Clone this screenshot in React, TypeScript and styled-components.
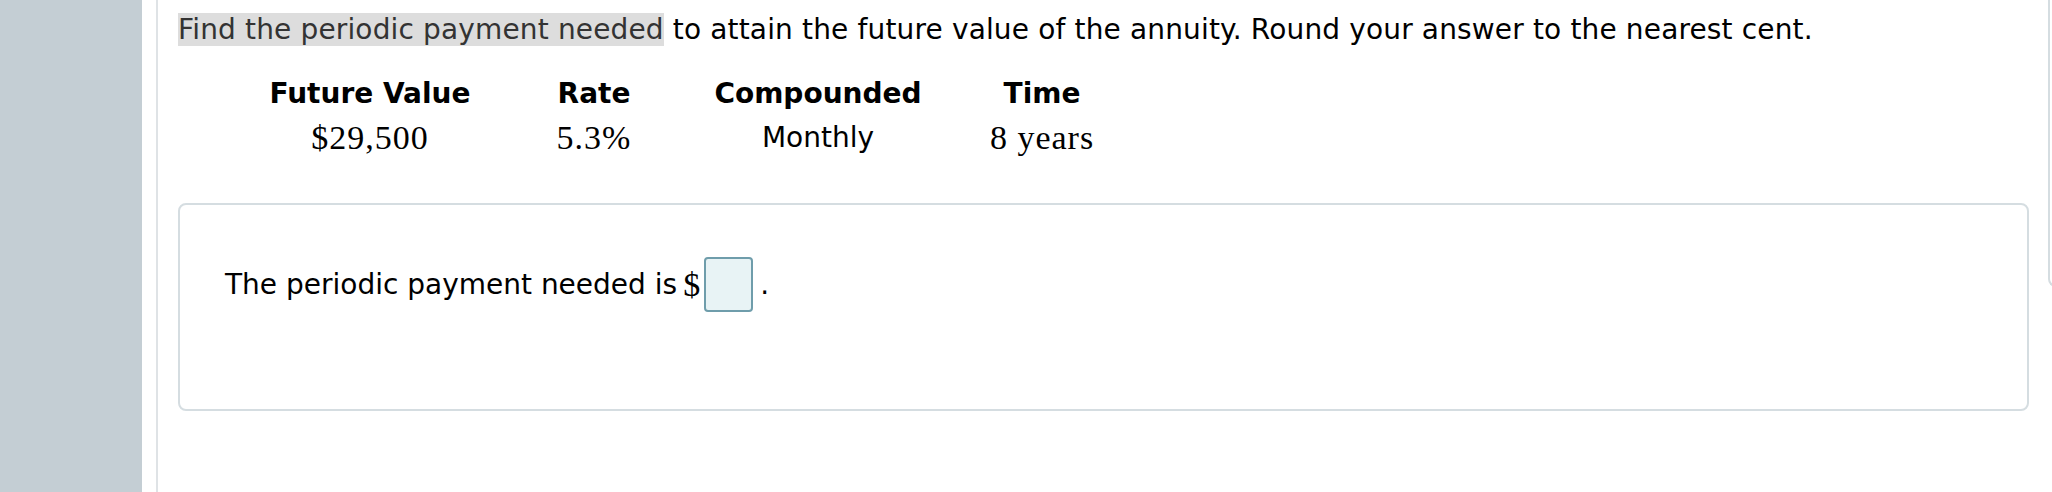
import React from 'react'
import styled, { createGlobalStyle } from 'styled-components'

const GlobalStyle = createGlobalStyle`
  html, body {
    margin: 0;
    padding: 0;
    background: #ffffff;
  }
  body {
    font-family: "DejaVu Sans", Verdana, sans-serif;
    color: #000000;
  }
`

const Page = styled.div`
  display: flex;
  width: 2052px;
  height: 492px;
  overflow: hidden;
  background: #ffffff;
`

const Sidebar = styled.div`
  flex: 0 0 142px;
  height: 100%;
  background: #c4ced4;
`

const Main = styled.div`
  flex: 1;
  margin-left: 14px;
  border-left: 2px solid #dfe3e6;
  padding: 14px 16px 0 20px;
  box-sizing: border-box;
  display: flex;
  flex-direction: column;
`

const Question = styled.div`
  font-size: 28px;
  letter-spacing: 0.15px;
  line-height: 31px;
  white-space: nowrap;
`

const Highlight = styled.span`
  background: #dddddd;
  color: #333333;
`

const DataTable = styled.div`
  display: grid;
  grid-template-columns: repeat(4, 224px);
  margin: 33px 0 0 80px;
  text-align: center;
`

const HeadCell = styled.div`
  font-weight: bold;
  font-size: 28px;
  line-height: 31px;
`

const ValueCell = styled.div<{ $serif?: boolean }>`
  margin-top: 9px;
  font-family: ${p => (p.$serif ? '"Liberation Serif", "Times New Roman", serif' : '"DejaVu Sans", Verdana, sans-serif')};
  font-size: ${p => (p.$serif ? '34px' : '28px')};
  letter-spacing: ${p => (p.$serif ? '1px' : '0')};
  line-height: 40px;
`

const AnswerBox = styled.div`
  margin-top: 45px;
  height: 208px;
  box-sizing: border-box;
  border: 2px solid #d5dde1;
  border-radius: 8px;
  padding: 52px 44px 0 45px;
`

const AnswerLine = styled.div`
  display: flex;
  align-items: center;
  font-size: 28px;
  white-space: nowrap;
`

const Dollar = styled.span`
  font-family: "Liberation Serif", "Times New Roman", serif;
  font-size: 34px;
  margin-left: 6px;
`

const AnswerInput = styled.div`
  width: 49px;
  height: 55px;
  box-sizing: border-box;
  margin-left: 4px;
  border: 2px solid #6f9dab;
  border-radius: 4px;
  background: #e8f3f5;
`

const Period = styled.span`
  margin-left: 7px;
`

const SidePanel = styled.div`
  flex: 0 0 12px;
  margin: 0 -8px 0 3px;
  height: 287px;
  box-sizing: border-box;
  border-left: 2px solid #d5dde1;
  border-bottom: 2px solid #d5dde1;
  border-radius: 0 0 0 8px;
`

const COLUMNS = [
  { head: 'Future Value', value: '$29,500', serif: true },
  { head: 'Rate', value: '5.3%', serif: true },
  { head: 'Compounded', value: 'Monthly', serif: false },
  { head: 'Time', value: '8 years', serif: true },
]

export default function App() {
  return (
    <>
      <GlobalStyle />
      <Page>
        <Sidebar />
        <Main>
          <Question>
            <Highlight>Find the periodic payment needed</Highlight> to attain the future value of the annuity. Round your answer to the nearest cent.
          </Question>
          <DataTable>
            {COLUMNS.map(c => (
              <HeadCell key={c.head}>{c.head}</HeadCell>
            ))}
            {COLUMNS.map(c => (
              <ValueCell key={c.head} $serif={c.serif}>{c.value}</ValueCell>
            ))}
          </DataTable>
          <AnswerBox>
            <AnswerLine>
              The periodic payment needed is
              <Dollar>$</Dollar>
              <AnswerInput />
              <Period>.</Period>
            </AnswerLine>
          </AnswerBox>
        </Main>
        <SidePanel />
      </Page>
    </>
  )
}
